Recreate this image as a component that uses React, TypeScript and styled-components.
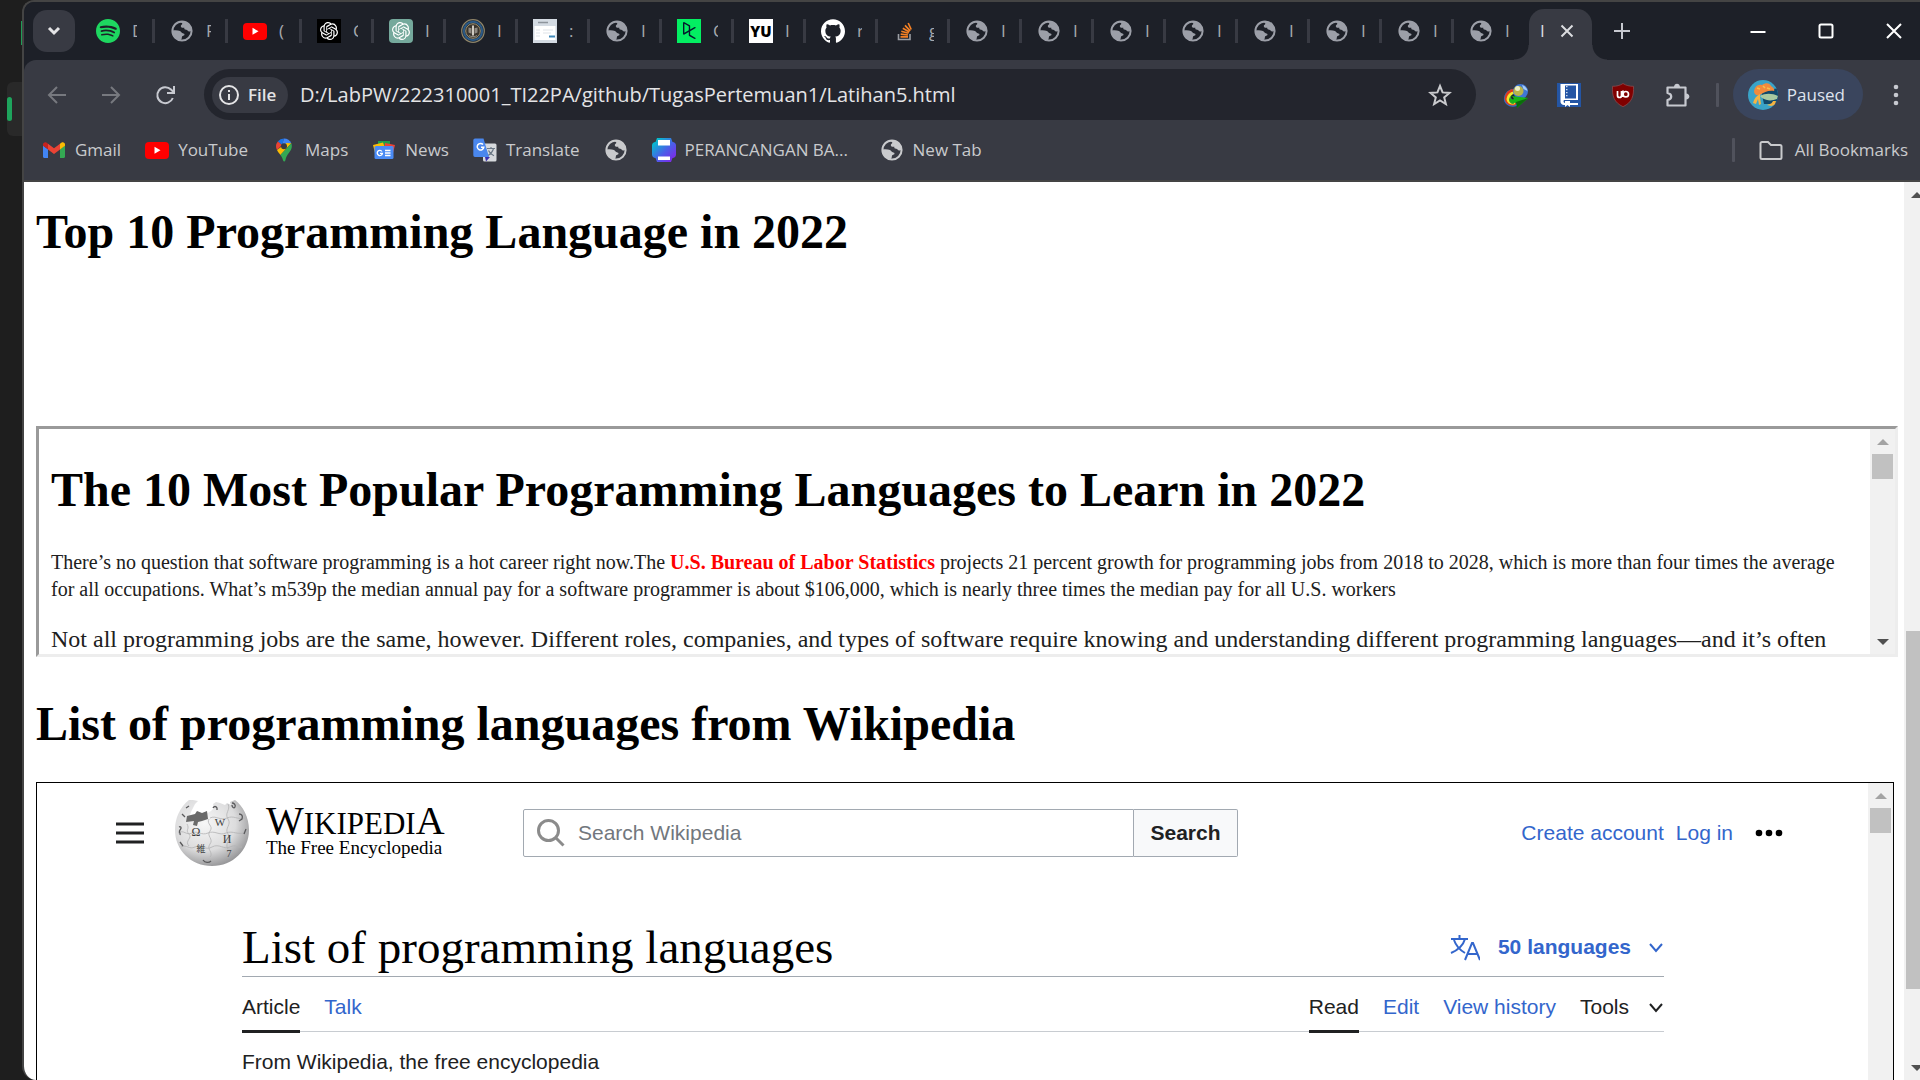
import React from "react";
import styled, { createGlobalStyle, css } from "styled-components";
import { SiSpotify, SiOpenai, SiGithub, SiDatacamp } from "react-icons/si";

const ui = `"Open Sans", "Noto Sans", sans-serif`;
const serif = `"Liberation Serif", "Times New Roman", serif`;
const sans = `"Liberation Sans", Arial, sans-serif`;

const GlobalStyle = createGlobalStyle`
  *, *::before, *::after { box-sizing: border-box; }
  body { margin: 0; background: #1e1e1e; overflow: hidden; }
  button, input { font: inherit; color: inherit; border: 0; background: none; padding: 0; margin: 0; }
  a { text-decoration: none; color: inherit; }
  svg { display: block; flex: none; }
`;

/* ---------- desktop ---------- */

const Desktop = styled.div`
  display: flex;
  height: 100vh;
  overflow: hidden;
  background: #1e1e1e;
`;

const Backdrop = styled.aside`
  display: flex;
  flex-direction: column;
  align-items: flex-end;
  width: 22px;
  flex: none;
  padding-top: 21px;
`;

const BehindIcon = styled.span`
  width: 1px;
  height: 24px;
  background: #1f9d57;
`;

const BehindTile = styled.span`
  display: flex;
  align-items: center;
  width: 15px;
  height: 54px;
  margin-top: 37px;
  border-radius: 6px 0 0 6px;
  background: #292929;
  &::before {
    content: "";
    width: 5px;
    height: 24px;
    border-radius: 3px;
    background: #1ea45c;
  }
`;

const Window = styled.div`
  display: flex;
  flex-direction: column;
  flex: 1;
  min-width: 0;
  margin-right: -9px;
  border: 2px solid #444444;
  border-right: 0;
  border-bottom: 0;
  border-radius: 12px 0 0 14px;
  overflow: hidden;
  background: #1d2028;
`;

/* ---------- tab strip ---------- */

const TabStrip = styled.header`
  display: flex;
  align-items: center;
  height: 58px;
  flex: none;
  padding-left: 9px;
  background: #1d2028;
  font-family: ${ui};
  font-size: 17px;
  color: #a6a8ae;
`;

const TabSearch = styled.button`
  display: grid;
  place-items: center;
  width: 42px;
  height: 42px;
  margin-right: 6px;
  border-radius: 14px;
  background: #383a43;
`;

const Tab = styled.button<{ $width: number; $last?: boolean }>`
  display: flex;
  align-items: center;
  width: ${(p) => p.$width}px;
  height: 24px;
  padding-left: 15px;
  border-right: 3px solid ${(p) => (p.$last ? "transparent" : "#383a43")};
`;

const TabLabel = styled.span`
  width: 5px;
  margin-left: 12px;
  overflow: hidden;
  line-height: 24px;
  text-align: left;
  white-space: nowrap;
`;

const ActiveTab = styled.div`
  position: relative;
  display: flex;
  align-items: center;
  align-self: flex-end;
  justify-content: space-between;
  width: 63px;
  height: 51px;
  margin-left: 3px;
  padding: 0 18px 8px 11px;
  border-radius: 15px 15px 0 0;
  background: #383a43;
  color: #dcdde0;
  &::before,
  &::after {
    content: "";
    position: absolute;
    bottom: 0;
    width: 15px;
    height: 15px;
  }
  &::before {
    right: 100%;
    background: radial-gradient(circle at 0 0, transparent 14px, #383a43 15px);
  }
  &::after {
    left: 100%;
    background: radial-gradient(circle at 100% 0, transparent 14px, #383a43 15px);
  }
`;

const ActiveLabel = styled(TabLabel)`
  margin-left: 0;
`;

const IconButton = styled.button<{ $size?: number }>`
  display: grid;
  place-items: center;
  flex: none;
  width: ${(p) => p.$size ?? 24}px;
  height: ${(p) => p.$size ?? 24}px;
`;

const NewTab = styled(IconButton)`
  margin-left: 18px;
`;

const Controls = styled.div`
  display: flex;
  gap: 44px;
  margin-left: auto;
  margin-right: 23px;
`;

/* ---------- toolbar ---------- */

const Toolbar = styled.div`
  display: flex;
  align-items: center;
  height: 69px;
  flex: none;
  padding: 0 21px;
  border-radius: 12px 0 0 0;
  background: #383a43;
  font-family: ${ui};
`;

const NavButtons = styled.nav`
  display: flex;
  gap: 30px;
  margin-right: 27px;
`;

const Omnibox = styled.div`
  display: flex;
  align-items: center;
  flex: 1;
  height: 51px;
  padding: 0 24px 0 8px;
  border-radius: 26px;
  background: #23252d;
  color: #e4e4e6;
`;

const FileChip = styled.button`
  display: flex;
  align-items: center;
  gap: 9px;
  width: 76px;
  height: 36px;
  padding: 0 7px;
  border-radius: 18px;
  background: #383a43;
  font-size: 17px;
  font-weight: 600;
`;

const UrlInput = styled.input`
  flex: 1;
  min-width: 0;
  margin-left: 12px;
  font-size: 20px;
  line-height: 28px;
  outline: 0;
`;

const Extensions = styled.div`
  display: flex;
  gap: 30px;
  margin-left: 27px;
`;

const Divider = styled.span<{ $left: number; $right: number }>`
  width: 3px;
  height: 24px;
  margin: 0 ${(p) => p.$right}px 0 ${(p) => p.$left}px;
  border-radius: 1px;
  background: #50525c;
`;

const Profile = styled.button`
  display: flex;
  align-items: center;
  gap: 9px;
  height: 51px;
  padding: 0 18px 0 15px;
  border-radius: 26px;
  background: #3a455d;
  color: #dfe3ee;
  font-size: 17px;
`;

const MenuButton = styled(IconButton)`
  margin-left: 21px;
`;

const BookmarkBar = styled.nav`
  display: flex;
  align-items: center;
  height: 53px;
  flex: none;
  padding: 0 21px 9px 18px;
  border-bottom: 2px solid #444444;
  background: #383a43;
  font-family: ${ui};
  font-size: 17px;
  line-height: 24px;
  color: #c9cacd;
`;

const BookmarkList = styled.div`
  display: flex;
  flex: 1;
  gap: 24px;
`;

const Bookmark = styled.a<{ $gap?: number; $minWidth?: number }>`
  display: flex;
  align-items: center;
  gap: ${(p) => p.$gap ?? 9}px;
  min-width: ${(p) => p.$minWidth ?? 0}px;
  white-space: nowrap;
`;

/* ---------- page ---------- */

const Viewport = styled.div`
  display: flex;
  flex: 1;
  min-height: 0;
  background: #ffffff;
`;

const Page = styled.main`
  flex: 1;
  min-width: 0;
  overflow: hidden;
  padding: 22px 6px 0 12px;
  font-family: ${serif};
  color: #000000;
`;

const Heading = styled.h1`
  margin: 0;
  font-size: 48px;
  line-height: 55px;
  font-weight: 700;
`;

const ArticleFrame = styled.section`
  display: flex;
  height: 231px;
  margin: 167px 0 39px;
  border: 3px solid;
  border-color: #9a9a9a #ededed #ededed #9a9a9a;
`;

const ArticleBody = styled.article`
  flex: 1;
  min-width: 0;
  overflow: hidden;
  padding: 33px 12px 0;
`;

const Paragraph = styled.p<{ $large?: boolean }>`
  margin: 0;
  color: #202020;
  ${(p) =>
    p.$large
      ? css`
          margin-top: 22px;
          font-size: 24px;
          line-height: 28px;
          white-space: nowrap;
        `
      : css`
          margin-top: 32px;
          font-size: 20px;
          line-height: 27px;
        `}
`;

const Red = styled.strong`
  color: #ff0000;
`;

const WikiFrame = styled.section`
  display: flex;
  height: 600px;
  margin: 31px 4px 0 0;
  border: 1px solid #000000;
`;

const Wiki = styled.div`
  flex: 1;
  min-width: 0;
  padding: 15px 84px 0 76px;
  font-family: ${sans};
  font-size: 21px;
  line-height: 24px;
  color: #202122;
`;

const WikiHeader = styled.header`
  display: flex;
  align-items: center;
  height: 70px;
`;

const WikiLogo = styled.a`
  display: flex;
  align-items: center;
  gap: 17px;
  width: 348px;
  margin-left: 28px;
`;

const Wordmark = styled.span`
  display: flex;
  flex-direction: column;
  padding-bottom: 4px;
  font-family: ${serif};
  color: #000000;
`;

const WordmarkTitle = styled.span`
  font-size: 31px;
  line-height: 30px;
`;

const Cap = styled.span`
  font-size: 40px;
`;

const Tagline = styled.span`
  font-size: 19px;
  line-height: 18px;
`;

const SearchForm = styled.form`
  display: flex;
  width: 715px;
  height: 48px;
`;

const SearchField = styled.label`
  display: flex;
  align-items: center;
  flex: 1;
  gap: 13px;
  padding-left: 13px;
  border: 1px solid #a2a9b1;
  border-radius: 2px 0 0 2px;
  color: #8b8b8b;
`;

const SearchInput = styled.input`
  flex: 1;
  min-width: 0;
  outline: 0;
  &::placeholder {
    color: #72777d;
    opacity: 1;
  }
`;

const SearchButton = styled.button`
  width: 104px;
  border: 1px solid #a2a9b1;
  border-left: 0;
  border-radius: 0 2px 2px 0;
  background: #f8f9fa;
  font-weight: 700;
  color: #202122;
`;

const AccountLinks = styled.nav`
  display: flex;
  align-items: center;
  gap: 12px;
  margin-left: auto;
  color: #3366cc;
`;

const MoreButton = styled(IconButton)`
  margin-left: 9px;
  color: #000000;
`;

const WikiArticle = styled.article`
  margin: 50px 120px 0 129px;
`;

const TitleRow = styled.div`
  display: flex;
  align-items: center;
  justify-content: space-between;
  height: 59px;
  border-bottom: 1px solid #a2a9b1;
`;

const WikiTitle = styled.h2`
  margin: 0;
  font-family: ${serif};
  font-size: 47px;
  line-height: 54px;
  font-weight: 400;
  color: #000000;
`;

const Languages = styled.button`
  display: flex;
  align-items: center;
  gap: 18px;
  color: #3366cc;
  font-weight: 700;
`;

const TabRow = styled.div`
  display: flex;
  justify-content: space-between;
  height: 55px;
  border-bottom: 1px solid #c8ccd1;
`;

const TabGroup = styled.nav`
  display: flex;
  gap: 24px;
`;

const WikiTab = styled.a<{ $active?: boolean }>`
  height: 56px;
  padding-top: 18px;
  color: ${(p) => (p.$active ? "#202122" : "#3366cc")};
  border-bottom: 3px solid ${(p) => (p.$active ? "#202122" : "transparent")};
`;

const ToolsButton = styled.button`
  display: flex;
  align-items: center;
  gap: 20px;
  height: 60px;
`;

const WikiIntro = styled.p`
  margin: 18px 0 0;
`;

/* ---------- scrollbars ---------- */

const Track = styled.div`
  display: flex;
  flex-direction: column;
  align-items: center;
  width: 25px;
  flex: none;
  background: #f1f1f1;
`;

const Thumb = styled.div<{ $height: number; $offset?: number }>`
  width: 21px;
  height: ${(p) => p.$height}px;
  margin: ${(p) => p.$offset ?? 0}px 0 auto;
  flex: none;
  background: #c1c1c1;
`;

const Arrow = styled.button<{ $down?: boolean; $tone: string }>`
  display: grid;
  place-items: center;
  width: 25px;
  height: 25px;
  flex: none;
  &::before {
    content: "";
    border: 6px solid transparent;
    border-top-width: ${(p) => (p.$down ? "6px" : "0")};
    border-bottom-width: ${(p) => (p.$down ? "0" : "6px")};
    border-${(p) => (p.$down ? "top" : "bottom")}-color: ${(p) => p.$tone};
  }
`;

function Scrollbar({ height, offset, upTone = "#a3a3a3" }: { height: number; offset?: number; upTone?: string }) {
  return (
    <Track>
      <Arrow $tone={upTone} aria-label="Scroll up" />
      <Thumb $height={height} $offset={offset} />
      <Arrow $down $tone="#505050" aria-label="Scroll down" />
    </Track>
  );
}

/* ---------- icons ---------- */

const Globe = ({ tone = "#9c9fa8" }: { tone?: string }) => (
  <svg width="24" height="24" viewBox="0 0 24 24">
    <circle cx="12" cy="12" r="9.6" fill="none" stroke={tone} strokeWidth="2" />
    <path fill={tone} d="M10.5 2.5C15 1.500 21.500 5 21.800 11.500c-.8 1-1.800 1.300-3 1-1.200-.4-1.300-1.500-2.600-1.700-1.500-.2-2.200-.8-1.900-2.100-1.500.3-3.300.2-3.500-1.500-.1-1.300 1-1.300 1.500-2.200.4-.9-1.300-1-1.800-2.500z" />
    <path fill={tone} d="M2.400 11.500c2.600-.3 5.600-.3 7.600.5 1.600.7 1.500 2.200 3.300 2.400 1.500.2 1.600 1.700.4 2.200-1.500.6-1.800.9-1.900 2.300-.1 1.200-.7 1.900-1.800 2.300C6 20.500 2.200 17 2.400 11.500z" />
  </svg>
);

const YouTube = () => (
  <svg width="24" height="24" viewBox="0 0 24 24">
    <rect y="4" width="24" height="17" rx="4" fill="#ff0000" />
    <path d="M9.500 8.800v7l6-3.500z" fill="#fff" />
  </svg>
);

const OpenAi = ({ bg, round }: { bg: string; round: number }) => (
  <svg width="24" height="24" viewBox="0 0 24 24">
    <rect width="24" height="24" rx={round} fill={bg} />
    <SiOpenai x="3" y="3" size={18} color="#fff" />
  </svg>
);

const Seal = () => (
  <svg width="24" height="24" viewBox="0 0 24 24">
    <circle cx="12" cy="12" r="11.300" fill="#1b2a3a" stroke="#8f8468" strokeWidth="1.200" />
    <circle cx="12" cy="12" r="9.200" fill="none" stroke="#2c5a86" strokeWidth="2" />
    <circle cx="12" cy="12" r="7.300" fill="#3a352e" stroke="#a0906c" strokeWidth="1" />
    <path d="M7.500 8.500l3 .8v5.400l-3-1.200zM16.500 8.500l-3 .8v5.400l3-1.200z" fill="#8e8a82" />
    <path d="M11 6.500h2v9l-1 2-1-2z" fill="#d0ccc2" />
    <path d="M8 16.500c2 1.500 6 1.500 8 0" fill="none" stroke="#8e8a82" />
  </svg>
);

const FormIcon = () => (
  <svg width="24" height="24" viewBox="0 0 24 24">
    <rect width="24" height="24" fill="#d4dbe3" />
    <rect x="1.500" y="7" width="21" height="14" fill="#fff" />
    <path d="M5 3.500h10" stroke="#8d949c" strokeWidth="1.500" />
    <path d="M3 11h4M10 11h10M3 14h4M10 14h8M3 17h4" stroke="#dfe3e8" />
    <rect x="16" y="16.500" width="6" height="2" fill="#3f87b8" />
  </svg>
);

const DataCamp = () => (
  <svg width="24" height="24" viewBox="0 0 24 24">
    <rect width="24" height="24" fill="#03ef62" />
    <SiDatacamp x="4" y="3" size={17} color="#05192d" />
  </svg>
);

const YuBox = styled.span`
  display: grid;
  place-items: center;
  width: 24px;
  height: 24px;
  flex: none;
  background: #ffffff;
  color: #000000;
  font-family: ${ui};
  font-size: 15px;
  font-weight: 800;
  line-height: 24px;
`;

const StackOverflow = () => (
  <svg width="24" height="24" viewBox="0 0 24 24">
    <path d="M5.500 15v5.500h11.500v-5.500" fill="none" stroke="#9a9da3" strokeWidth="1.600" />
    <path d="M7.500 17.800h7.500M7.700 15.200l7.300.8M8.300 12.300l7.200 2M9.800 9.200l6.500 3.700M12 6.300l5.200 5.500M15.200 4l3 6.500" stroke="#f48024" strokeWidth="1.700" />
  </svg>
);

const Gmail = () => (
  <svg width="24" height="24" viewBox="0 0 24 24">
    <path d="M1 19V7.500l5 3.800V20H2.500A1.500 1.500 0 0 1 1 19z" fill="#4285f4" />
    <path d="M23 19V7.500l-5 3.800V20h3.500a1.500 1.500 0 0 0 1.500-1z" fill="#34a853" />
    <path d="M18 5.800l1.300-1C21 3.600 23 4.700 23 6.600v1.200l-5 3.700z" fill="#fbbc04" />
    <path d="M6 11.500V5.800l6 4.500 6-4.500v5.700L12 16z" fill="#ea4335" />
    <path d="M1 7.800V6.600c0-1.900 2-3 3.700-1.800l1.300 1v5.700z" fill="#c5221f" />
  </svg>
);

const Maps = () => (
  <svg width="24" height="24" viewBox="0 0 24 24">
    <path d="M12 .5a8 8 0 0 0-6.200 3l4.300 3.600z" fill="#1a73e8" />
    <path d="M5.800 3.500A8 8 0 0 0 5 12l5.100-4.900z" fill="#ea4335" />
    <path d="M12 .5a8 8 0 0 1 7.300 4.700L10 7z" fill="#4285f4" />
    <path d="M5 12c1 2 2.300 3.500 3.400 5L19.300 5.200 14.500 5z" fill="#fbbc04" />
    <path d="M19.300 5.200c1.500 4-.3 7-2.300 9.500-2 2.400-2.900 4.400-3.600 7.500-.4 1.600-2 1.600-2.400 0-.5-2-1.300-3.400-2.600-5.200z" fill="#34a853" />
    <circle cx="12" cy="8.200" r="3" fill="#383a43" />
  </svg>
);

const News = () => (
  <svg width="24" height="24" viewBox="0 0 24 24">
    <path d="M6 3h12v6H6z" fill="#1e9e4a" />
    <path d="M1 7l10-2.500 3 8L3 15z" fill="#fbbc04" />
    <path d="M13 5l10 2-2 8-9-2z" fill="#ea4335" />
    <rect x="2.500" y="8" width="19" height="13" rx="1.500" fill="#4a8bf5" />
    <path d="M10 13.500a2.600 2.600 0 1 0 .4 1.800H8M13 12.500h5.500M13 15h5.500M13 17.500h5.500" fill="none" stroke="#fff" strokeWidth="1.300" />
  </svg>
);

const Translate = () => (
  <svg width="24" height="24" viewBox="0 0 24 24">
    <rect x="10" y="5.500" width="13.500" height="18" rx="1.500" fill="#d6d9dd" />
    <path d="M14 10.500h8M18 9v1.500M20.500 10.500c-.8 3-2.800 5.500-5.500 7M15.500 12.500c1 2.200 3 4.200 5.500 5.200" fill="none" stroke="#6b7886" strokeWidth="1.200" />
    <path d="M12 19h5l-4 4.500z" fill="#3a2fb0" />
    <path d="M2 .5h8.500L16 19H2a1.700 1.700 0 0 1-1.700-1.700V2.200A1.700 1.700 0 0 1 2 .5z" fill="#4a87ee" />
    <path d="M10 6.500a3.300 3.300 0 1 0 .8 2.700H8" fill="none" stroke="#fff" strokeWidth="1.500" />
  </svg>
);

const Printer = () => (
  <svg width="24" height="24" viewBox="0 0 24 24">
    <defs>
      <linearGradient id="print" x1="0" y1="0" x2="1" y2="1">
        <stop offset=".1" stopColor="#00c4cc" />
        <stop offset=".55" stopColor="#4b5ee8" />
        <stop offset=".9" stopColor="#7d2ae8" />
      </linearGradient>
    </defs>
    <path d="M5 0h14l1.500 4C22.500 4 24 5.500 24 7.500v9c0 2-1.500 3.500-3.500 3.500L19 24H5l-1.500-4C1.500 20 0 18.500 0 16.500v-9C0 5.500 1.500 4 3.500 4z" fill="url(#print)" />
    <path d="M6 2h12v5.500H6zM6 18.500h12V22H6z" fill="#fff" />
  </svg>
);

const Puzzle = () => (
  <svg width="26" height="26" viewBox="0 0 26 26" fill="none" stroke="#c7c9d0" strokeWidth="2.200" strokeLinejoin="round">
    <path d="M2.500 4.500h18v18h-18v-5.500c5-1 5-6 0-7z" />
    <path d="M9 4c0-4.500 6-4.500 6 0zM21 10.500c4.500 0 4.500 6 0 6z" fill="#c7c9d0" stroke="none" />
  </svg>
);

const Idm = () => (
  <svg width="26" height="26" viewBox="0 0 26 26">
    <path d="M1 17a10 10 0 0 1 11-11l6 9-4 8C7 25 2 22 1 17z" fill="#2a6fd0" />
    <path d="M1.500 15a9.500 9.500 0 0 1 10-9l5 8-4 8C6 24 2 20 1.500 15z" fill="#e03a1c" />
    <path d="M3.500 16a8 8 0 0 1 8-7.500l3 6-3 7C7 22 4 20 3.500 16z" fill="#f4e62e" />
    <path d="M6 17a6 6 0 0 1 5.500-6l2 4-3 6C8 21 6 19 6 17z" fill="#2aa52a" />
    <path d="M8 15a4 4 0 0 1 4-4l2 4-3 3z" fill="#20242e" />
    <circle cx="17.500" cy="8.500" r="7.500" fill="#3f76d4" />
    <circle cx="15.500" cy="8" r="5" fill="#b9b44a" />
    <circle cx="14.500" cy="5.500" r="2.500" fill="#eef0c8" />
    <path d="M19 2c3 1 5 3 5.500 6l-4-2z" fill="#a8ccf5" />
    <path d="M9 13l16 2-11 10v-5c-4 0-7-1-8-4 2 1 3 1 5 0z" fill="#17b517" />
    <path d="M13 19l12-4-11 10z" fill="#0b6b0b" />
  </svg>
);

const Book = () => (
  <svg width="24" height="24" viewBox="0 0 24 24">
    <rect width="24" height="24" fill="#2455a4" />
    <path d="M4 1h17v16H8c-1 0-1.500.5-1.500 1.300S7 20 8 20h13v2H7c-2 0-3.500-1.500-3.500-3V1z" fill="#fff" />
    <path d="M8 2.500h11v13H8z" fill="#2455a4" />
    <path d="M9.800 3v12" stroke="#fff" strokeWidth="1.200" strokeDasharray="1.200 1.800" />
    <path d="M8 18h5v6l-2.500-2L8 24z" fill="#fff" />
  </svg>
);

const Shield = () => (
  <svg width="24" height="24" viewBox="0 0 24 24">
    <path d="M12 .5c3 2 6.500 2.800 10.500 2.800C23 13 21 19.500 12 23.700 3 19.500 1 13 1.500 3.300 5.500 3.300 9 2.500 12 .5z" fill="#800000" stroke="#8c4a4e" strokeWidth=".8" />
    <path d="M6.500 8v4.500a2 2 0 0 0 4 0V8M12 7.500v6.500" fill="none" stroke="#fff" strokeWidth="1.700" />
    <circle cx="14.800" cy="11.200" r="2.700" fill="none" stroke="#fff" strokeWidth="1.700" />
  </svg>
);

const Avatar = () => (
  <svg width="30" height="30" viewBox="0 0 30 30">
    <defs>
      <clipPath id="face"><circle cx="15" cy="15" r="15" /></clipPath>
    </defs>
    <g clipPath="url(#face)">
      <rect width="30" height="30" fill="#3aa3c8" />
      <path d="M13 11l18-3v16H16z" fill="#12496b" />
      <path d="M6 11c1-5 4-7 8-6 4-3 8-2 9 1 3 2 4 4 3 5-5-1-10 1-14 4-4 1-6-1-6-4z" fill="#f28a3c" />
      <path d="M12 16c5-3 12-3 18 0l-1 3c-5 2-10 2-15-1z" fill="#a9c9a0" />
      <path d="M12 14c-4 2-6 5-7 9l3 1 2-5 1 6 2-1-1-7zM25 21c-1 2-2 3-6 4l4 1 4-1 1-4z" fill="#f5b342" />
      <path d="M9 8l3 1M15 6l2 2M19 8l3 1" stroke="#f7c04a" strokeWidth="1.500" />
    </g>
  </svg>
);

const WikiGlobe = () => (
  <svg width="74" height="68" viewBox="0 0 74 68">
    <defs>
      <radialGradient id="ball" cx=".4" cy=".35" r=".7">
        <stop offset="0" stopColor="#f7f7f7" />
        <stop offset=".6" stopColor="#dcdcdd" />
        <stop offset="1" stopColor="#8f8f91" />
      </radialGradient>
    </defs>
    <path d="M14 1c-9 7-14 18-14 30 0 20 16 36 37 36s37-16 37-36C74 18 68 7 60 1l-5 2 1 3-4-2-2 2-5-2-4-1-3 2 1 4-3 3-5 3-6 1-5 2-6 2 2-7 4-8 3-3-5-1z" fill="url(#ball)" />
    <path d="M12 17l8-2 2-3 5 2 5-2 1 8-6 2-4 1-1 4-4-1 1-4-8 1z" fill="#6a6a6a" />
    <path d="M12 25c3 5-2 6 2 10s-5 7 0 12M34 20c-3 5 5 7 1 12s4 8 0 13 4 9 0 13M53 5c3 6-4 9 0 15s-4 9 0 15-4 9 0 15M3 34c6-4 8 3 14 0s9 3 16 0 11 3 18 0 12 3 21-1M6 48c6-3 8 3 14 0s10 4 17 0 12 3 18 0 8 1 12 0M35 19c6-3 10 3 17 0s10 2 18 0" fill="none" stroke="#b2b2b4" strokeWidth=".8" />
    <g fill="#3e3e40" fontFamily="Liberation Serif, Noto Sans CJK JP, serif" textAnchor="middle">
      <text x="21" y="37" fontSize="12">Ω</text>
      <text x="45" y="27" fontSize="11">W</text>
      <text x="52" y="44" fontSize="12">И</text>
      <text x="26" y="53" fontSize="9">維</text>
      <text x="54" y="58" fontSize="10">7</text>
    </g>
    <g fill="none" stroke="#5a5a5c" strokeWidth="1.300">
      <path d="M64 15c3 0 4 2 3 5l-3 2M57 4c2 0 4 2 3 4s-3 0-3-2M38 9c1-2 3-2 4 0v2M4 28c2-1 3 1 1 3s1 3 0 5M5 43l3 4M7 15l3 3M28 61c2 3 6 3 8 1M71 30l-2 5M11 9l3-2" />
    </g>
  </svg>
);

const Stroke = ({ d, size = 24, width = 2 }: { d: string; size?: number; width?: number }) => (
  <svg width={size} height={size} viewBox={`0 0 ${size} ${size}`} fill="none" stroke="currentColor" strokeWidth={width}>
    <path d={d} />
  </svg>
);

const Chevron = () => <Stroke size={15} width={2} d="M1 4l6 7 6-7" />;

const Tone = styled.span<{ $tone: string }>`
  display: contents;
  color: ${(p) => p.$tone};
`;

/* ---------- data ---------- */

const tabs: { icon: React.ReactNode; label: string; width: number }[] = [
  { icon: <SiSpotify size={24} color="#1ed760" />, label: "D", width: 74 },
  { icon: <Globe />, label: "F", width: 73 },
  { icon: <YouTube />, label: "(", width: 74 },
  { icon: <OpenAi bg="#000000" round={0} />, label: "C", width: 72 },
  { icon: <OpenAi bg="#75a99c" round={4} />, label: "I", width: 72 },
  { icon: <Seal />, label: "I", width: 72 },
  { icon: <FormIcon />, label: ":", width: 72 },
  { icon: <Globe />, label: "I", width: 72 },
  { icon: <DataCamp />, label: "C", width: 72 },
  { icon: <YuBox>YU</YuBox>, label: "I", width: 72 },
  { icon: <SiGithub size={24} color="#ffffff" />, label: "r", width: 72 },
  { icon: <StackOverflow />, label: "g", width: 72 },
  ...Array.from({ length: 8 }, () => ({ icon: <Globe />, label: "I", width: 72 })),
];

const bookmarks: { icon: React.ReactNode; label: string; minWidth?: number }[] = [
  { icon: <Gmail />, label: "Gmail" },
  { icon: <YouTube />, label: "YouTube" },
  { icon: <Maps />, label: "Maps" },
  { icon: <News />, label: "News" },
  { icon: <Translate />, label: "Translate" },
  { icon: <Globe tone="#c9cacd" />, label: "" },
  { icon: <Printer />, label: "PERANCANGAN BA...", minWidth: 204 },
  { icon: <Globe tone="#c9cacd" />, label: "New Tab" },
];

export default function App() {
  return (
    <>
      <GlobalStyle />
      <Desktop>
        <Backdrop>
          <BehindIcon />
          <BehindTile />
        </Backdrop>
        <Window>
          <TabStrip>
            <TabSearch aria-label="Search tabs">
              <Tone $tone="#e4e4e6"><Stroke size={14} width={3} d="M2 4l5 5 5-5" /></Tone>
            </TabSearch>
            {tabs.map((tab, i) => (
              <Tab key={i} $width={tab.width} $last={i === tabs.length - 1}>
                {tab.icon}
                <TabLabel>{tab.label}</TabLabel>
              </Tab>
            ))}
            <ActiveTab>
              <ActiveLabel>I</ActiveLabel>
              <IconButton $size={14} aria-label="Close tab">
                <Stroke size={14} width={2} d="M1.500 1.500l11 11M12.500 1.500l-11 11" />
              </IconButton>
            </ActiveTab>
            <NewTab aria-label="New tab">
              <Tone $tone="#c7c9d0"><Stroke width={2} d="M12 4v16M4 12h16" /></Tone>
            </NewTab>
            <Controls>
              <IconButton aria-label="Minimize"><Tone $tone="#ffffff"><Stroke width={2} d="M4.500 13h15" /></Tone></IconButton>
              <IconButton aria-label="Maximize"><Tone $tone="#ffffff"><Stroke width={2} d="M7 5.500h10a1.500 1.500 0 0 1 1.500 1.500v10a1.500 1.500 0 0 1-1.500 1.500H7A1.500 1.500 0 0 1 5.500 17V7A1.500 1.500 0 0 1 7 5.500z" /></Tone></IconButton>
              <IconButton aria-label="Close window"><Tone $tone="#ffffff"><Stroke width={2} d="M5 5l14 14M19 5L5 19" /></Tone></IconButton>
            </Controls>
          </TabStrip>

          <Toolbar>
            <NavButtons>
              <IconButton aria-label="Back"><Tone $tone="#77797f"><Stroke width={2} d="M21 12H4M12 4l-8 8 8 8" /></Tone></IconButton>
              <IconButton aria-label="Forward"><Tone $tone="#77797f"><Stroke width={2} d="M3 12h17M12 4l8 8-8 8" /></Tone></IconButton>
              <IconButton aria-label="Reload">
                <Tone $tone="#c7c9d0"><Stroke width={2} d="M19.800 15a8 8 0 1 1-1.800-8.500l2.500 2.500M21 3v7h-7" /></Tone>
              </IconButton>
            </NavButtons>
            <Omnibox>
              <FileChip>
                <Stroke size={20} width={2} d="M10 1a9 9 0 1 0 0 18 9 9 0 0 0 0-18zM10 9v6M10 5v2" />
                File
              </FileChip>
              <UrlInput aria-label="Address" defaultValue="D:/LabPW/222310001_TI22PA/github/TugasPertemuan1/Latihan5.html" />
              <IconButton aria-label="Bookmark this page">
                <Tone $tone="#c9cacd"><Stroke width={2} d="M12 3l2.600 6.400 6.900.5-5.300 4.500 1.700 6.700L12 17.400l-5.900 3.700 1.700-6.700L2.500 9.900l6.900-.5z" /></Tone>
              </IconButton>
            </Omnibox>
            <Extensions>
              <IconButton aria-label="Download manager"><Idm /></IconButton>
              <IconButton aria-label="Dictionary"><Book /></IconButton>
              <IconButton aria-label="Ad blocker"><Shield /></IconButton>
              <IconButton aria-label="Extensions"><Puzzle /></IconButton>
            </Extensions>
            <Divider $left={27} $right={14} />
            <Profile><Avatar />Paused</Profile>
            <MenuButton aria-label="Menu">
              <svg width="6" height="24" viewBox="0 0 6 24" fill="#c7c9d0">
                <circle cx="3" cy="4" r="2.300" /><circle cx="3" cy="12" r="2.300" /><circle cx="3" cy="20" r="2.300" />
              </svg>
            </MenuButton>
          </Toolbar>

          <BookmarkBar>
            <BookmarkList>
              {bookmarks.map((b, i) => (
                <Bookmark key={i} href="#" aria-label={b.label || "Bookmark"} $minWidth={b.minWidth}>
                  {b.icon}
                  {b.label}
                </Bookmark>
              ))}
            </BookmarkList>
            <Divider $left={24} $right={24} />
            <Bookmark href="#" $gap={12}>
              <Stroke width={2} d="M3 4h6l3 3h9a1.500 1.500 0 0 1 1.500 1.500v11A1.500 1.500 0 0 1 21 21H3a1.500 1.500 0 0 1-1.500-1.500v-14A1.500 1.500 0 0 1 3 4z" />
              All Bookmarks
            </Bookmark>
          </BookmarkBar>

          <Viewport>
            <Page>
              <Heading>Top 10 Programming Language in 2022</Heading>
              <ArticleFrame>
                <ArticleBody>
                  <Heading>The 10 Most Popular Programming Languages to Learn in 2022</Heading>
                  <Paragraph>
                    There’s no question that software programming is a hot career right now.The <Red>U.S. Bureau of Labor Statistics</Red>{" "}
                    projects 21 percent growth for programming jobs from 2018 to 2028, which is more than four times the average for all
                    occupations. What’s m539p the median annual pay for a software programmer is about $106,000, which is nearly three
                    times the median pay for all U.S. workers
                  </Paragraph>
                  <Paragraph $large>
                    Not all programming jobs are the same, however. Different roles, companies, and types of software require knowing
                    and understanding different programming languages—and it’s often
                  </Paragraph>
                </ArticleBody>
                <Scrollbar height={25} />
              </ArticleFrame>

              <Heading>List of programming languages from Wikipedia</Heading>
              <WikiFrame>
                <Wiki>
                  <WikiHeader>
                    <IconButton $size={34} aria-label="Main menu">
                      <Stroke size={28} width={3} d="M0 5h28M0 14h28M0 23h28" />
                    </IconButton>
                    <WikiLogo href="#">
                      <WikiGlobe />
                      <Wordmark>
                        <WordmarkTitle><Cap>W</Cap>IKIPEDI<Cap>A</Cap></WordmarkTitle>
                        <Tagline>The Free Encyclopedia</Tagline>
                      </Wordmark>
                    </WikiLogo>
                    <SearchForm>
                      <SearchField>
                        <Stroke size={28} width={3} d="M11.500 1.500a10 10 0 1 0 0 20 10 10 0 0 0 0-20zM18.500 18.500l8 8" />
                        <SearchInput placeholder="Search Wikipedia" aria-label="Search Wikipedia" />
                      </SearchField>
                      <SearchButton type="button">Search</SearchButton>
                    </SearchForm>
                    <AccountLinks>
                      <a href="#">Create account</a>
                      <a href="#">Log in</a>
                      <MoreButton $size={30} aria-label="More options">
                        <svg width="28" height="8" viewBox="0 0 28 8">
                          <circle cx="4" cy="4" r="3.300" /><circle cx="14" cy="4" r="3.300" /><circle cx="24" cy="4" r="3.300" />
                        </svg>
                      </MoreButton>
                    </AccountLinks>
                  </WikiHeader>

                  <WikiArticle>
                    <TitleRow>
                      <WikiTitle>List of programming languages</WikiTitle>
                      <Languages>
                        <Stroke size={30} width={2} d="M1 7h17M9.500 3v4M15 7c-2 7-7 11-14 14M4 8c2 6 6 10 11 13M15 28l7-17h1l7 17M17.500 22h10" />
                        50 languages
                        <Chevron />
                      </Languages>
                    </TitleRow>
                    <TabRow>
                      <TabGroup>
                        <WikiTab href="#" $active>Article</WikiTab>
                        <WikiTab href="#">Talk</WikiTab>
                      </TabGroup>
                      <TabGroup>
                        <WikiTab href="#" $active>Read</WikiTab>
                        <WikiTab href="#">Edit</WikiTab>
                        <WikiTab href="#">View history</WikiTab>
                        <ToolsButton>Tools<Chevron /></ToolsButton>
                      </TabGroup>
                    </TabRow>
                    <WikiIntro>From Wikipedia, the free encyclopedia</WikiIntro>
                  </WikiArticle>
                </Wiki>
                <Scrollbar height={25} />
              </WikiFrame>
            </Page>
            <Scrollbar height={358} offset={424} upTone="#505050" />
          </Viewport>
        </Window>
      </Desktop>
    </>
  );
}
